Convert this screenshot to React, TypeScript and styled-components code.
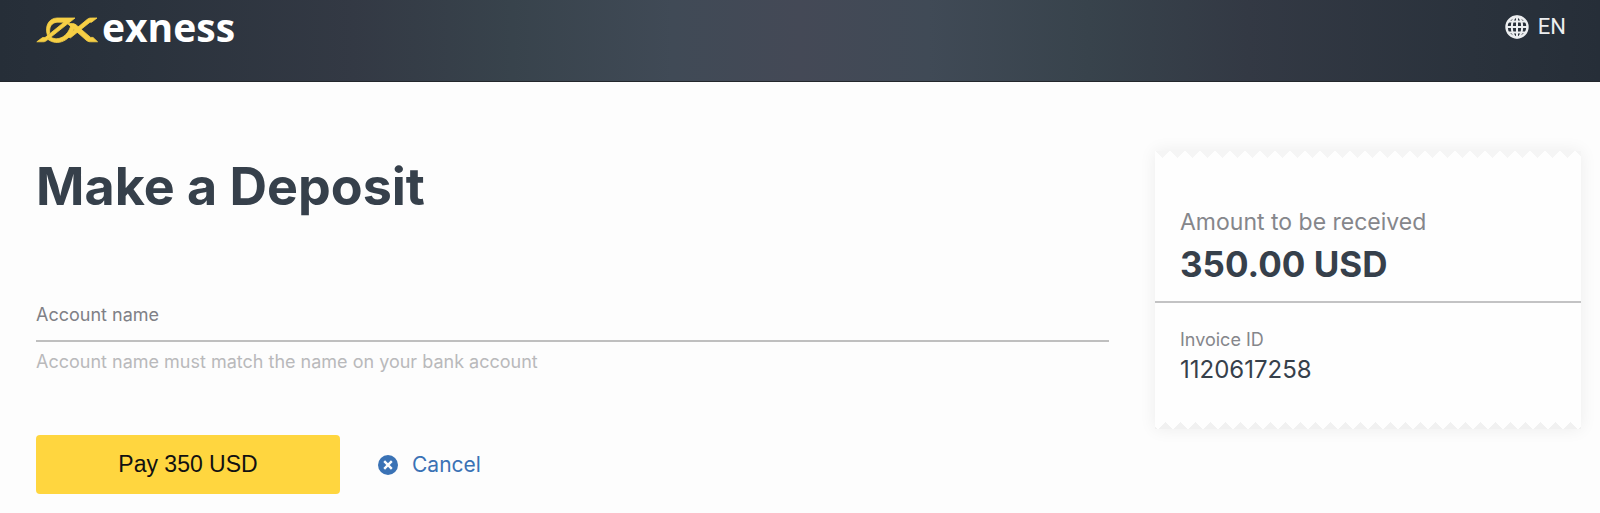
import React from "react";
import styled, { createGlobalStyle } from "styled-components";

const GlobalStyle = createGlobalStyle`
  *, *::before, *::after { box-sizing: border-box; }
  body {
    margin: 0;
    background: #fdfdfd;
    color: #36404b;
    font-family: Inter, "Liberation Sans", sans-serif;
  }
`;

const Header = styled.header`
  display: flex;
  justify-content: space-between;
  align-items: flex-start;
  height: 82px;
  padding: 8px 34px 0 36px;
  border-bottom: 1px solid #23272c;
  background: linear-gradient(
    90deg,
    #262e38 0%,
    #2a323c 8%,
    #333944 22%,
    #38434c 32%,
    #404a56 42%,
    #444956 50%,
    #404a56 58%,
    #38434c 68%,
    #333944 78%,
    #2a323c 92%,
    #262e38 100%
  );
`;

const Brand = styled.a`
  display: flex;
  align-items: center;
  gap: 4px;
  color: #ffffff;
  font-family: "Open Sans", sans-serif;
  font-size: 39px;
  font-weight: 700;
  line-height: 38px;
  text-decoration: none;
`;

const BrandMark = styled.svg`
  width: 62px;
  height: 26px;
  margin-top: 6px;
`;

const LanguageButton = styled.button`
  display: flex;
  align-items: center;
  gap: 9px;
  padding: 6px 0;
  border: 0;
  background: none;
  color: #eceef0;
  font-family: Roboto, sans-serif;
  font-size: 22px;
  line-height: 26px;
  cursor: pointer;
`;

const Globe = styled.svg`
  width: 24px;
  height: 24px;
`;

const Page = styled.main`
  display: flex;
  align-items: flex-start;
  gap: 46px;
  padding: 69px 19px 18px 36px;

  @media (max-width: 900px) {
    flex-direction: column;
    align-items: stretch;
  }
`;

const DepositForm = styled.form`
  flex: 1;
  min-width: 0;
`;

const Title = styled.h1`
  margin: 0 0 84px;
  padding-top: 4px;
  font-size: 52px;
  font-weight: 700;
  line-height: 64px;
`;

const Field = styled.div`
  display: flex;
  flex-direction: column;
  margin-bottom: 61px;
  font-size: 18px;
  line-height: 24px;
`;

const FieldLabel = styled.label`
  color: #7f8086;
`;

const FieldInput = styled.input`
  height: 15px;
  padding: 0;
  border: 0;
  border-bottom: 2px solid #bfbfbf;
  outline: none;
  background: transparent;
  color: inherit;
  font: inherit;
`;

const FieldHint = styled.span`
  padding-top: 8px;
  color: #b9b9bb;
`;

const Actions = styled.div`
  display: flex;
  align-items: center;
  gap: 38px;
`;

const PayButton = styled.button`
  width: 304px;
  height: 59px;
  border: 0;
  border-radius: 4px;
  background: #ffd63f;
  color: #111111;
  font-family: "Liberation Sans", Arial, sans-serif;
  font-size: 23px;
  cursor: pointer;
`;

const CancelLink = styled.a`
  display: flex;
  align-items: center;
  gap: 14px;
  color: #3a72b5;
  font-size: 21px;
  line-height: 28px;
  text-decoration: none;
`;

const CancelIcon = styled.svg`
  width: 20px;
  height: 20px;
`;

const Receipt = styled.aside`
  position: relative;
  width: 426px;
  max-width: 100%;
  background: #fefefe;
  box-shadow: 0 0 16px rgba(0, 0, 0, 0.07);

  &::before,
  &::after {
    content: "";
    position: absolute;
    left: 0;
    right: 0;
    height: 7px;
    background-size: 15px 7px;
  }

  &::before {
    top: 0;
    background-image: conic-gradient(from -45deg at 50% 100%, #f5f5f5 90deg, transparent 0);
  }

  &::after {
    bottom: 0;
    background-image: conic-gradient(from 135deg at 50% 0, #f1f1f1 90deg, transparent 0);
    background-position-x: 3px;
  }
`;

const ReceiptSection = styled.dl<{ $divided?: boolean }>`
  margin: 0;
  padding: ${(p) => (p.$divided ? "55px 25px 15px" : "25px 25px 43px")};
  border-bottom: ${(p) => (p.$divided ? "2px solid #c3c3c4" : "0")};
`;

const Term = styled.dt<{ $large?: boolean }>`
  color: #85868b;
  font-size: ${(p) => (p.$large ? "23px" : "18px")};
  line-height: ${(p) => (p.$large ? "32px" : "24px")};
`;

const Value = styled.dd<{ $large?: boolean }>`
  margin: 0;
  padding-top: ${(p) => (p.$large ? "4px" : "2px")};
  font-size: ${(p) => (p.$large ? "35px" : "24px")};
  font-weight: ${(p) => (p.$large ? 700 : 400)};
  line-height: ${(p) => (p.$large ? "44px" : "32px")};
`;

export default function App() {
  return (
    <>
      <GlobalStyle />
      <Header>
        <Brand href="#">
          <BrandMark viewBox="0 0 62 26" aria-hidden="true">
            <g fill="#f6cf45" stroke="#f6cf45" strokeWidth="0.8" strokeLinejoin="round">
              <path d="M0.8 24.8 L6.5 20.6 H9 L28 5.2 H21 C15 6 13.3 10 13.6 16.2 L11.4 18.2 C8.5 9 13 1.2 21 1 H39 L10.5 23.6 C9.3 24.6 8.3 24.8 6.8 24.8 Z" />
              <path d="M12.2 22.6 L15 20.2 C22 24.4 32 19.5 34.8 8.5 L38.3 9.8 C35.5 23.5 21.5 29.5 12.2 22.6 Z" />
              <path d="M61 1 L55.6 5.2 H54 L34.5 20.8 L30.5 19.6 L51 2.6 C52.6 1.2 53.8 1 55.4 1 Z" />
              <path d="M31.4 6.6 H36.5 C38 6.6 39.2 7.2 40.2 8 L54.6 20.4 H57 L61.6 24.8 H54.5 C52.5 24.8 51.4 24.2 50 23 Z" />
            </g>
          </BrandMark>
          exness
        </Brand>
        <LanguageButton type="button">
          <Globe viewBox="0 0 24 24" fill="none" stroke="currentColor" strokeWidth="2" aria-hidden="true">
            <circle cx="12" cy="12" r="10.5" strokeWidth="2.4" />
            <ellipse cx="12" cy="12" rx="5.2" ry="10.5" />
            <path d="M12 1.5v21M1.5 12h21M3.5 6.5h17M3.5 17.5h17" />
          </Globe>
          EN
        </LanguageButton>
      </Header>
      <Page>
        <DepositForm onSubmit={(e) => e.preventDefault()}>
          <Title>Make a Deposit</Title>
          <Field>
            <FieldLabel htmlFor="account-name">Account name</FieldLabel>
            <FieldInput id="account-name" type="text" aria-describedby="account-hint" />
            <FieldHint id="account-hint">Account name must match the name on your bank account</FieldHint>
          </Field>
          <Actions>
            <PayButton type="submit">Pay 350 USD</PayButton>
            <CancelLink href="#">
              <CancelIcon viewBox="0 0 20 20" aria-hidden="true">
                <circle cx="10" cy="10" r="10" fill="currentColor" />
                <path d="M6.2 6.2l7.6 7.6M13.8 6.2l-7.6 7.6" stroke="#fdfdfd" strokeWidth="2.4" />
              </CancelIcon>
              Cancel
            </CancelLink>
          </Actions>
        </DepositForm>
        <Receipt>
          <ReceiptSection $divided>
            <Term $large>Amount to be received</Term>
            <Value $large>350.00 USD</Value>
          </ReceiptSection>
          <ReceiptSection>
            <Term>Invoice ID</Term>
            <Value>1120617258</Value>
          </ReceiptSection>
        </Receipt>
      </Page>
    </>
  );
}
